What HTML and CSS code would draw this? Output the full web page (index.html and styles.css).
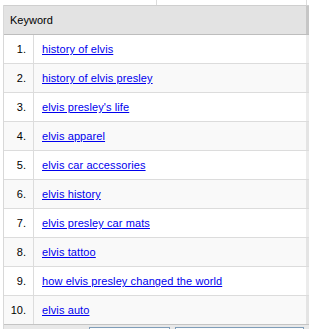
FILE: index.html
```html
<!DOCTYPE html>
<html>
<head>
<meta charset="utf-8">
<link rel="stylesheet" href="styles.css">
<title>Keywords</title>
</head>
<body>
<div class="prev-row">
  <div class="prev-cell prev-a"></div>
  <div class="prev-cell prev-b"></div>
</div>
<div class="table">
  <div class="head">
    <div class="head-title">Keyword</div>
    <div class="gutter head-gutter"></div>
  </div>
  <div class="row"><div class="num">1.</div><div class="kw"><a href="#">history of elvis</a></div><div class="gutter"></div></div>
  <div class="row alt"><div class="num">2.</div><div class="kw"><a href="#">history of elvis presley</a></div><div class="gutter"></div></div>
  <div class="row"><div class="num">3.</div><div class="kw"><a href="#">elvis presley's life</a></div><div class="gutter"></div></div>
  <div class="row alt"><div class="num">4.</div><div class="kw"><a href="#">elvis apparel</a></div><div class="gutter"></div></div>
  <div class="row"><div class="num">5.</div><div class="kw"><a href="#">elvis car accessories</a></div><div class="gutter"></div></div>
  <div class="row alt"><div class="num">6.</div><div class="kw"><a href="#">elvis history</a></div><div class="gutter"></div></div>
  <div class="row"><div class="num">7.</div><div class="kw"><a href="#">elvis presley car mats</a></div><div class="gutter"></div></div>
  <div class="row alt"><div class="num">8.</div><div class="kw"><a href="#">elvis tattoo</a></div><div class="gutter"></div></div>
  <div class="row"><div class="num">9.</div><div class="kw"><a href="#">how elvis presley changed the world</a></div><div class="gutter"></div></div>
  <div class="row alt"><div class="num">10.</div><div class="kw"><a href="#">elvis auto</a></div><div class="gutter"></div></div>
  <div class="foot">
    <div class="btn btn-a"></div>
    <div class="btn btn-b"></div>
  </div>
</div>
</body>
</html>
```
FILE: styles.css
```css
html, body {
  margin: 0;
  padding: 0;
  background: #ffffff;
}

body {
  font-family: "Liberation Sans", Arial, sans-serif;
  font-size: 11px;
  color: #000000;
  width: 312px;
  height: 329px;
  overflow: hidden;
}

/* tail of the table above */
.prev-row {
  display: flex;
  height: 5px;
}
.prev-cell {
  height: 5px;
}
.prev-a {
  width: 156px;
}
.prev-b {
  width: 149px;
  border-left: 1px solid #dcdcdc;
  border-right: 1px solid #dcdcdc;
}

.table {
  margin-left: 3px;
  width: 305px;
  border-left: 1px solid #d8d8d8;
}

.head {
  display: flex;
  height: 28px;
  border-top: 1px solid #cfcfcf;
  border-bottom: 1px solid #bdbdbd;
  background: #e3e3e3;
}
.head-title {
  flex: 1;
  line-height: 28px;
  padding-left: 6px;
}

.gutter {
  width: 3px;
  background: #ececec;
}
.head-gutter {
  background: #c6c6c6;
}

.row {
  display: flex;
  height: 28px;
  border-bottom: 1px solid #dcdcdc;
  background: #ffffff;
  line-height: 28px;
}
.row.alt {
  background: #f9f9f9;
}
.row.alt .gutter {
  background: #e4e4e4;
}

.num {
  width: 22px;
  padding-right: 7px;
  text-align: right;
  border-right: 1px solid #dcdcdc;
}
.kw {
  flex: 1;
  padding-left: 8px;
  letter-spacing: 0.1px;
}
.kw a {
  color: #0000ee;
  text-decoration: underline;
}

/* pager strip, cut off by the frame */
.foot {
  position: relative;
  height: 4px;
  overflow: hidden;
  border-top: 1px solid #c4c4c4;
  margin-top: -1px;
  background: #e8e8e8;
}
.btn {
  position: absolute;
  top: 2px;
  height: 20px;
  border: 1px solid #7f9db9;
  background: #fbfbfb;
  box-sizing: border-box;
}
.btn-a {
  left: 85px;
  width: 81px;
}
.btn-b {
  left: 171px;
  width: 129px;
}
```
